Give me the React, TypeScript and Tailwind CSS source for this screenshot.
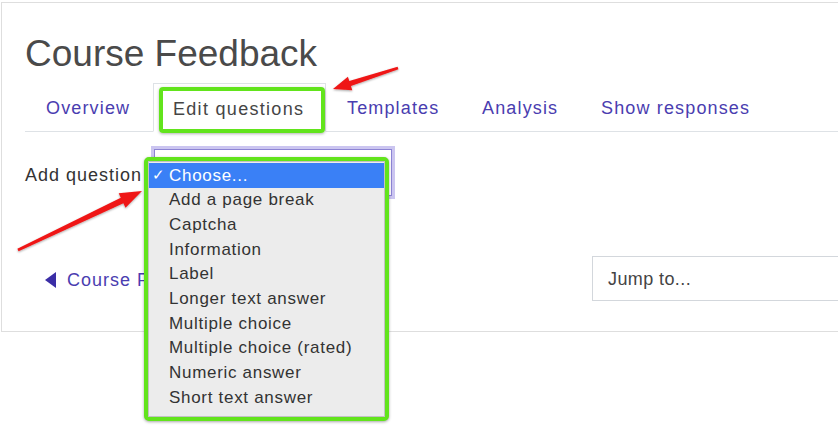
import React from "react";

const items = [
  "Add a page break",
  "Captcha",
  "Information",
  "Label",
  "Longer text answer",
  "Multiple choice",
  "Multiple choice (rated)",
  "Numeric answer",
  "Short text answer",
];

const tabs = [
  { label: "Overview", active: false, w: "w-[128px]" },
  { label: "Edit questions", active: true, w: "w-[173px]" },
  { label: "Templates", active: false, w: "w-[135px]" },
  { label: "Analysis", active: false, w: "w-[119px]" },
  { label: "Show responses", active: false, w: "w-[195px]" },
];

export default function App() {
  return (
    <div className="relative w-[838px] h-[428px] overflow-hidden bg-white font-['Liberation_Sans',Arial,sans-serif]">
      <div className="mt-[2px] ml-[1px] h-[330px] border-t border-l border-b border-[#dedede] pl-[23px] pt-[29px]">
        <h1 className="text-[37px] leading-[44px] text-[#4a4a4a] font-normal">Course Feedback</h1>

        <div className="mt-[7px] flex border-b border-[#dee2e6] h-[49px]">
          {tabs.map((t) => (
            <div
              key={t.label}
              className={
                t.active
                  ? `${t.w} shrink-0 h-[49px] -mb-px border border-[#dee2e6] border-b-white bg-white pl-[19px] pt-[3px] flex items-center text-[18px] tracking-[1.3px] text-[#454545]`
                  : `${t.w} shrink-0 h-[48px] border border-transparent pl-[20px] pt-[3px] flex items-center text-[18px] tracking-[1.15px] text-[#4a3db0]`
              }
            >
              {t.label}
            </div>
          ))}
        </div>

        <div className="mt-[17px] flex items-center">
          <span className="mt-[5px] text-[18px] tracking-[1px] text-[#333]">Add question</span>
          <div className="ml-[12px] h-[47px] w-[238px] border border-[#8d84d4] shadow-[0_0_0_3px_#cbc5f0] bg-white"></div>
        </div>

        <div className="mt-[60px] flex items-center justify-between">
          <div className="ml-[20px] mt-[3px] flex items-center gap-[11px] text-[#4a3db0]">
            <svg width="11" height="16" viewBox="0 0 11 16">
              <polygon points="11,0 11,16 0,8" fill="#3b2ea6" />
            </svg>
            <span className="text-[18px] tracking-[1px]">Course Feedback</span>
          </div>
          <div className="mr-[-60px] h-[45px] w-[306px] border border-[#d3d7dc] pl-[15px] pt-[1px] flex items-center text-[18px] tracking-[0.4px] text-[#444]">
            Jump to...
          </div>
        </div>
      </div>

      {/* green highlight around active tab */}
      <div className="absolute left-[159px] top-[87px] w-[166px] h-[46px] border-[4px] border-[#62e41c] rounded-[4px] shadow-[0_1px_3px_rgba(0,0,0,0.3)]"></div>

      {/* open dropdown menu */}
      <div className="absolute left-[144px] top-[157px] w-[245px] h-[264px] border-[4px] border-[#62e41c] rounded-[5px] shadow-[0_1px_3px_rgba(0,0,0,0.35)] bg-[#ececec]">
        <div className="h-full border border-[#c2c2c2] pt-[1px] text-[17px] tracking-[0.7px] text-[#333]">
          <div className="h-[24.7px] bg-[#3a80f6] text-white flex items-center">
            <span className="w-[20px] pl-[3px] text-[15px]">✓</span>
            <span>Choose...</span>
          </div>
          {items.map((i) => (
            <div key={i} className="h-[24.7px] flex items-center pl-[20px]">
              {i}
            </div>
          ))}
        </div>
      </div>

      {/* red arrows */}
      <svg className="absolute left-0 top-0" width="838" height="428" viewBox="0 0 838 428">
        <defs>
          <filter id="sh" x="-20%" y="-20%" width="140%" height="140%">
            <feDropShadow dx="0" dy="1" stdDeviation="1" floodColor="#000" floodOpacity="0.35" />
          </filter>
        </defs>
        <polygon
          filter="url(#sh)"
          fill="#ef1515"
          points="397.6,66.7 349.3,81.1 347.9,76.8 333,89 352.3,90.2 350.9,85.9 398.4,69.3"
        />
        <polygon
          filter="url(#sh)"
          fill="#ef1515"
          points="17.4,248.8 120.8,197.8 118.7,193.3 142,191 125.5,207.7 123.4,203.2 18.6,251.2"
        />
      </svg>
    </div>
  );
}
